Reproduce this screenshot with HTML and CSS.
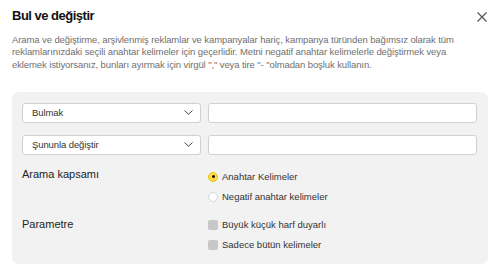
FILE: index.html
```html
<!DOCTYPE html>
<html lang="tr">
<head>
    <meta charset="UTF-8">
    <title>Bul ve değiştir</title>
    <link rel="stylesheet" href="styles.css">
</head>
<body>
    <div id="dialog">
        <div id="header">
            <h1>Bul ve değiştir</h1>
            <div class="close">
                <svg width="10" height="10" viewBox="0 0 10 10">
                    <path d="M0.5 0.5 L9.5 9.5 M9.5 0.5 L0.5 9.5" stroke="#555" stroke-width="1.2" fill="none"/>
                </svg>
            </div>
        </div>

        <p class="hint">Arama ve değiştirme, arşivlenmiş reklamlar ve kampanyalar hariç, kampanya türünden bağımsız olarak tüm reklamlarınızdaki seçili anahtar kelimeler için geçerlidir. Metni negatif anahtar kelimelerle değiştirmek veya eklemek istiyorsanız, bunları ayırmak için virgül "," veya tire "- "olmadan boşluk kullanın.</p>

        <div id="panel">
            <div class="row">
                <div class="select">
                    <span>Bulmak</span>
                    <svg width="9" height="5" viewBox="0 0 9 5"><path d="M0.5 0.5 L4.5 4.3 L8.5 0.5" stroke="#444" stroke-width="1" fill="none"/></svg>
                </div>
                <div class="input"></div>
            </div>
            <div class="row">
                <div class="select">
                    <span>Şununla değiştir</span>
                    <svg width="9" height="5" viewBox="0 0 9 5"><path d="M0.5 0.5 L4.5 4.3 L8.5 0.5" stroke="#444" stroke-width="1" fill="none"/></svg>
                </div>
                <div class="input"></div>
            </div>
            <div class="row scope">
                <div class="label">Arama kapsamı</div>
                <div class="options">
                    <div class="option"><span class="radio checked"></span>Anahtar Kelimeler</div>
                    <div class="option"><span class="radio"></span>Negatif anahtar kelimeler</div>
                </div>
            </div>
            <div class="row params">
                <div class="label">Parametre</div>
                <div class="options">
                    <div class="option"><span class="check"></span>Büyük küçük harf duyarlı</div>
                    <div class="option"><span class="check"></span>Sadece bütün kelimeler</div>
                </div>
            </div>
        </div>
    </div>
</body>
</html>
```

FILE: styles.css
```css
body {
    margin: 0;
    font-family: "Liberation Sans", Arial, sans-serif;
    background-color: #fff;
    color: #222;
}
#dialog {
    padding: 7px 13px 10px 12px;
}
#header {
    display: flex;
    justify-content: space-between;
    align-items: center;
}
h1 {
    margin: 0;
    font-size: 13px;
    line-height: 18px;
    font-weight: bold;
    letter-spacing: -0.5px;
    color: #111;
}
.close {
    display: flex;
    margin-top: 2px;
}
.hint {
    max-width: 443px;
    margin: 9px 0 21px;
    font-size: 9.5px;
    line-height: 12.3px;
    letter-spacing: -0.1px;
    color: #707070;
}
#panel {
    background-color: #f2f2f2;
    border-radius: 7px;
    padding: 11px 11px 9px 10px;
    margin-right: -1px;
}
.row {
    display: grid;
    grid-template-columns: 179px 1fr;
    column-gap: 7px;
    margin-bottom: 12px;
}
.row.scope {
    margin-bottom: 8px;
}
.row.params {
    margin-bottom: 0;
}
.select, .input {
    height: 18px;
    background-color: #fff;
    border: 1px solid #d0d0d0;
    border-radius: 3px;
}
.select {
    display: flex;
    align-items: center;
    justify-content: space-between;
    padding: 0 7px 0 9px;
    font-size: 9.5px;
    letter-spacing: -0.1px;
    color: #333;
}
.label {
    font-size: 11px;
    line-height: 14px;
    color: #222;
}
.params .label {
    line-height: 19px;
}
.options {
    display: flex;
    flex-direction: column;
}
.option {
    display: flex;
    align-items: center;
    height: 20px;
    font-size: 9.5px;
    color: #333;
}
.radio {
    box-sizing: border-box;
    width: 10px;
    height: 10px;
    border-radius: 50%;
    border: 1px solid #d6d6d6;
    background-color: #fff;
    margin-right: 4px;
    position: relative;
}
.radio.checked {
    background-color: #ffdb4d;
    border-color: #f5c400;
}
.radio.checked::after {
    content: "";
    position: absolute;
    left: 2.5px;
    top: 2.5px;
    width: 3px;
    height: 3px;
    border-radius: 50%;
    background-color: #111;
}
.check {
    width: 10px;
    height: 10px;
    border-radius: 2px;
    background-color: #c8c8c8;
    margin-right: 4px;
}
```
